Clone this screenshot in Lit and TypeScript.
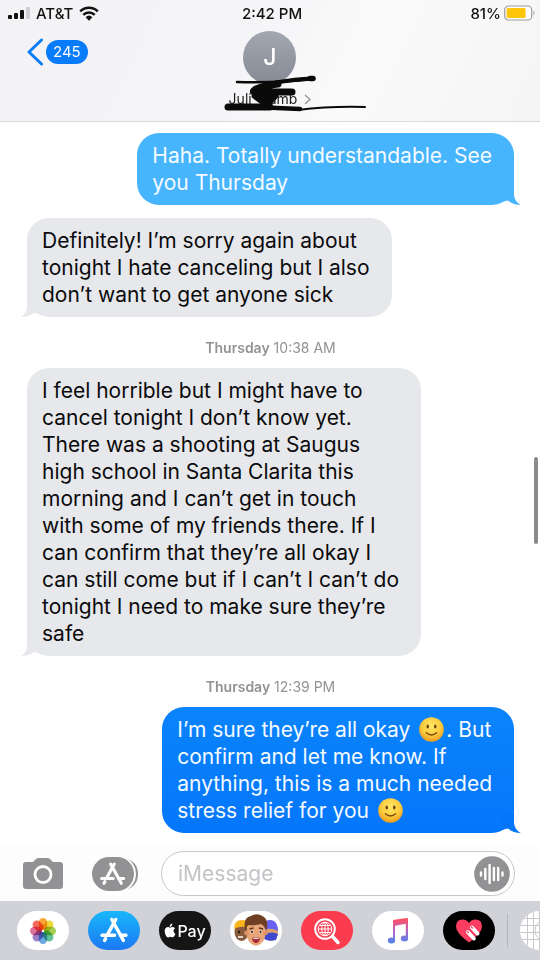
import { LitElement, html, css, svg } from "lit";
import { customElement, property } from "lit/decorators.js";
import { classMap } from "lit/directives/class-map.js";

type Part = string | { emoji: true };
type Entry =
  | { kind: "message"; side: "sent" | "received"; faded?: boolean; lines: Part[][] }
  | { kind: "stamp"; day: string; time: string };

const SMILE: Part = { emoji: true };

const THREAD: Entry[] = [
  {
    kind: "message",
    side: "sent",
    faded: true,
    lines: [["Haha. Totally understandable. See"], ["you Thursday"]],
  },
  {
    kind: "message",
    side: "received",
    lines: [
      ["Definitely! I’m sorry again about"],
      ["tonight I hate canceling but I also"],
      ["don’t want to get anyone sick"],
    ],
  },
  { kind: "stamp", day: "Thursday", time: "10:38 AM" },
  {
    kind: "message",
    side: "received",
    lines: [
      ["I feel horrible but I might have to"],
      ["cancel tonight I don’t know yet."],
      ["There was a shooting at Saugus"],
      ["high school in Santa Clarita this"],
      ["morning and I can’t get in touch"],
      ["with some of my friends there. If I"],
      ["can confirm that they’re all okay I"],
      ["can still come but if I can’t I can’t do"],
      ["tonight I need to make sure they’re"],
      ["safe"],
    ],
  },
  { kind: "stamp", day: "Thursday", time: "12:39 PM" },
  {
    kind: "message",
    side: "sent",
    lines: [
      ["I’m sure they’re all okay ", SMILE, ". But"],
      ["confirm and let me know. If"],
      ["anything, this is a much needed"],
      ["stress relief for you ", SMILE],
    ],
  },
];

const smile = html`<svg class="emoji" viewBox="0 0 24 24" role="img" aria-label="slightly smiling face">
  <defs>
    <radialGradient id="face" cx="50%" cy="35%" r="65%">
      <stop offset="0" stop-color="#ffe766" />
      <stop offset="0.6" stop-color="#fccb3d" />
      <stop offset="1" stop-color="#ef9a1f" />
    </radialGradient>
  </defs>
  <circle cx="12" cy="12" r="11.8" fill="url(#face)" />
  <ellipse cx="8.4" cy="9.2" rx="1.2" ry="1.9" fill="#6b4310" />
  <ellipse cx="15.6" cy="9.2" rx="1.2" ry="1.9" fill="#6b4310" />
  <path d="M7 15.2Q12 19.4 17 15.2" fill="none" stroke="#7a4a10" stroke-width="1.3" stroke-linecap="round" />
</svg>`;

/* The three crossed sticks of the App Store mark, on a 34 unit box. */
const sticks = svg`<g fill="none" stroke="#fff" stroke-linecap="round" stroke-width="3.4">
  <path d="M18.8 5.5L10.6 20.4M8.6 24.6L7.6 26.4" />
  <path d="M14.8 5.5L26.4 26.4" />
  <path d="M5 21.2H17.6M23.6 21.2H29" />
</g>`;

@customElement("chat-bubble")
export class ChatBubble extends LitElement {
  @property() side: "sent" | "received" = "received";
  @property({ type: Boolean }) faded = false;
  @property({ attribute: false }) lines: Part[][] = [];

  static styles = css`
    :host {
      display: flex;
    }
    .bubble {
      position: relative;
      margin: 0;
      padding: 9px 22px 9px 15px;
      border-radius: 22px;
      font-size: 21px;
      line-height: 27px;
      white-space: pre;
    }
    .received {
      background: #e7e8eb;
      color: #0b0b0d;
    }
    .sent {
      margin-left: auto;
      background: linear-gradient(#0a84fb, #0476fb);
      color: #f4faff;
    }
    .faded {
      background: #47b5fd;
    }
    .line {
      display: block;
    }
    .tail {
      position: absolute;
      bottom: 0;
      width: 22px;
      height: 20px;
    }
    .received .tail {
      left: -6px;
      fill: #e7e8eb;
    }
    .sent .tail {
      right: -7px;
      fill: #0476fb;
    }
    .faded .tail {
      fill: #47b5fd;
    }
    .emoji {
      width: 25px;
      height: 25px;
      margin: 0 2px 0 3px;
      vertical-align: -5px;
    }
  `;

  render() {
    const classes = { bubble: true, [this.side]: true, faded: this.faded };
    const tail =
      this.side === "sent"
        ? "M15 0V9C15 14 18 18 22 20C17 20 12.5 18.5 9 15.5L2 17V0Z"
        : "M6 0V9C6 14 4 17.5 0 20C5 20 9.5 18.5 13 16L20 17V0Z";
    return html`<p class=${classMap(classes)}>${this.lines.map(
      (line) => html`<span class="line">${line.map((p) => (typeof p === "string" ? p : smile))}</span>`
    )}<svg class="tail" viewBox="0 0 22 20" aria-hidden="true"><path d=${tail} /></svg></p>`;
  }
}

@customElement("chat-header")
export class ChatHeader extends LitElement {
  static styles = css`
    :host {
      display: block;
      background: linear-gradient(115deg, #f3f3f5, #f5f5f8 45%, #fafafa 65%, #f5f5f6);
      border-bottom: 1px solid #d9d9db;
      color: #111;
    }
    .status,
    .nav {
      display: grid;
      grid-template-columns: 1fr auto 1fr;
    }
    .status {
      align-items: center;
      height: 26px;
      padding: 0 4px 0 8px;
      font-size: 15px;
      font-weight: 500;
    }
    .carrier,
    .power {
      display: flex;
      align-items: center;
    }
    .carrier {
      gap: 6px;
    }
    .power {
      justify-content: flex-end;
      gap: 3px;
    }
    .nav {
      height: 95px;
      align-items: start;
    }
    .back {
      display: flex;
      align-items: center;
      justify-self: start;
      gap: 3px;
      margin: 12px 0 0 27px;
      padding: 0;
      border: 0;
      background: none;
      font: inherit;
    }
    .count {
      padding: 0 7px;
      border-radius: 12px;
      background: #087cfa;
      color: #fff;
      font-size: 15px;
      line-height: 24px;
    }
    .contact {
      position: relative;
      display: flex;
      flex-direction: column;
      align-items: center;
      padding: 5px 0 0;
      border: 0;
      background: none;
      color: #222;
      font: inherit;
    }
    .avatar {
      width: 53px;
      border-radius: 50%;
      background: linear-gradient(#a3a7b2, #868a95);
      color: #fff;
      font-size: 23px;
      font-weight: 500;
      line-height: 53px;
    }
    .name {
      display: flex;
      align-items: center;
      gap: 7px;
      font-size: 14px;
      line-height: 30px;
    }
    .hidden {
      width: 17px;
    }
    .fragments {
      display: flex;
    }
    .scribble {
      position: absolute;
      left: 50%;
      top: 46px;
      width: 150px;
      height: 44px;
      margin-left: -50px;
    }
  `;

  render() {
    return html`
      <div class="status">
        <div class="carrier">
          <svg width="22" height="14" viewBox="0 0 22 14" aria-hidden="true">
            <rect x="0" y="9" width="4" height="4" rx="1" fill="#111" />
            <rect x="6" y="7" width="4" height="6" rx="1" fill="#111" />
            <rect x="12" y="4" width="4" height="9" rx="1" fill="#111" />
            <rect x="18" y="1" width="4" height="12" rx="1" fill="#cfcfd1" />
          </svg>
          <span>AT&amp;T</span>
          <svg width="20" height="15" viewBox="0 0 20 15" aria-hidden="true">
            <g fill="none" stroke="#111" stroke-width="2.5">
              <path d="M1.2 5.4A12.5 12.5 0 0 1 18.8 5.4" />
              <path d="M4.3 8.9A8 8 0 0 1 15.7 8.9" />
            </g>
            <path d="M6.6 11.2A5 5 0 0 1 13.4 11.2L10 14.8Z" fill="#111" />
          </svg>
        </div>
        <span>2:42 PM</span>
        <div class="power">
          <span>81%</span>
          <svg width="32" height="16" viewBox="0 0 32 16" aria-hidden="true">
            <rect x="0.7" y="1" width="27" height="14" rx="3.8" fill="#fbfbfb" stroke="#9b9b9f" stroke-width="1.2" />
            <rect x="2.6" y="3" width="19" height="10" rx="1.6" fill="#fdc60b" />
            <path d="M29.5 5.5Q31.6 8 29.5 10.5Z" fill="#9b9b9f" />
          </svg>
        </div>
      </div>
      <div class="nav">
        <button class="back" aria-label="Back, 245 unread">
          <svg width="16" height="28" viewBox="0 0 16 28" aria-hidden="true">
            <path d="M14.5 2L2 14L14.5 26" fill="none" stroke="#087cfa" stroke-width="3" stroke-linecap="round" stroke-linejoin="round" />
          </svg>
          <span class="count">245</span>
        </button>
        <button class="contact">
          <span class="avatar">J</span>
          <span class="name">
            <span class="fragments"><span>Juli</span><span class="hidden"></span><span>amb</span></span>
            <svg width="7" height="11" viewBox="0 0 7 11" aria-hidden="true">
              <path d="M1 1L6 5.5L1 10" fill="none" stroke="#8e8e93" stroke-width="1.2" />
            </svg>
          </span>
          <svg class="scribble" viewBox="0 0 150 44" aria-hidden="true">
            <g fill="none" stroke="#0a0a0a" stroke-linecap="round" stroke-linejoin="round">
              <path d="M17 10Q58 11 94 7" stroke-width="2.5" />
              <path d="M56 10.5Q76 7 92 6.500" stroke-width="4" />
              <path d="M90 6.5H93" stroke-width="5.5" />
              <path d="M58 12Q46 13 36 17Q30 21 38 20H72" stroke-width="7" />
              <path d="M34 24L42 30H50L56 24Z" stroke-width="5" fill="#0a0a0a" />
              <path d="M8 35H50" stroke-width="7" />
              <path d="M34 35L80 37" stroke-width="4.5" />
              <path d="M78 38Q110 34 145 35" stroke-width="2" />
            </g>
          </svg>
        </button>
      </div>
    `;
  }
}

@customElement("chat-composer")
export class ChatComposer extends LitElement {
  static styles = css`
    :host {
      display: flex;
      align-items: center;
      padding: 6px 25px 5px 22px;
      background: #fdfdfe;
    }
    button {
      display: block;
      padding: 0;
      border: 0;
      background: none;
    }
    svg {
      display: block;
    }
    .apps {
      margin: 0 23px 0 28px;
    }
    .field {
      display: flex;
      flex: 1;
      align-items: center;
      box-sizing: border-box;
      height: 45px;
      min-width: 0;
      padding: 0 4px 0 16px;
      border: 1px solid #c8c8cc;
      border-radius: 23px;
      background: #fff;
    }
    .input {
      flex: 1;
      min-width: 0;
      padding: 0;
      border: 0;
      outline: 0;
      background: none;
      color: #111;
      font: inherit;
      font-size: 21px;
    }
    .input::placeholder {
      color: #c4c4c8;
      opacity: 1;
    }
  `;

  render() {
    return html`
      <button aria-label="Camera">
        <svg width="42" height="34" viewBox="0 0 42 34">
          <path d="M4 5H11L14 2Q15 1 17 1H25Q27 1 28 2L31 5H38Q41 5 41 8V29Q41 32 38 32H4Q1 32 1 29V8Q1 5 4 5Z" fill="#929295" />
          <circle cx="21" cy="17.5" r="8" fill="none" stroke="#fff" stroke-width="2.8" />
        </svg>
      </button>
      <button class="apps" aria-label="Apps">
        <svg width="46" height="34" viewBox="0 0 46 34">
          <path d="M32 1Q46 4 46 17T32 33Z" fill="#929295" />
          <rect x="-1" y="-1" width="45" height="36" rx="18" fill="#fdfdfe" />
          <rect x="0" y="0" width="42" height="34" rx="17" fill="#929295" />
          <g transform="translate(5 2) scale(0.92)">${sticks}</g>
        </svg>
      </button>
      <div class="field">
        <input class="input" type="text" placeholder="iMessage" aria-label="iMessage" />
        <button aria-label="Record audio">
          <svg width="36" height="36" viewBox="0 0 36 36">
            <circle cx="18" cy="18" r="17.8" fill="#929295" />
            <path d="M7 16.5V19.5M11.3 13V23M15.6 9V27M19.9 12V24M24.2 12V24M28.5 16.5V19.5" fill="none" stroke="#fff" stroke-width="2.4" stroke-linecap="round" />
          </svg>
        </button>
      </div>
    `;
  }
}

@customElement("app-strip")
export class AppStrip extends LitElement {
  static styles = css`
    :host {
      display: flex;
      align-items: center;
      gap: 19px;
      height: 59px;
      padding-left: 17px;
      background: #d1d2d8;
      overflow: hidden;
    }
    .app {
      flex: none;
      display: flex;
      align-items: center;
      justify-content: center;
      width: 52px;
      height: 39px;
      padding: 0;
      border: 0;
      border-radius: 20px;
      overflow: hidden;
      background: #fff;
    }
    .petal {
      mix-blend-mode: multiply;
    }
    .store {
      background: linear-gradient(#19b7fb, #1c78f2);
    }
    .pay {
      gap: 1px;
      background: #151515;
      color: #fff;
      font: 500 16px/20px Inter, "Liberation Sans", sans-serif;
    }
    .search {
      background: #fb3b4e;
    }
    .heart {
      background: #000;
    }
    .rule {
      flex: none;
      width: 1px;
      height: 33px;
      margin: 0 -7px;
      background: #b5b6bc;
    }
  `;

  render() {
    const petals: [number, string][] = [
      [0, "#f9a63a"],
      [45, "#ecd93a"],
      [90, "#a3cf52"],
      [135, "#63c29a"],
      [180, "#6aa9e0"],
      [225, "#9b80c8"],
      [270, "#e0709c"],
      [315, "#f5695a"],
    ];
    return html`
      <button class="app" aria-label="Photos">
        <svg width="28" height="28" viewBox="0 0 28 28">
          ${petals.map(
            ([angle, fill]) =>
              svg`<rect class="petal" x="9.8" y="1" width="8.4" height="12" rx="4.2" fill=${fill} transform="rotate(${angle} 14 14)" />`
          )}
        </svg>
      </button>
      <button class="app store" aria-label="App Store">
        <svg width="34" height="34" viewBox="0 0 34 34">${sticks}</svg>
      </button>
      <button class="app pay" aria-label="Apple Pay">
        <svg width="12" height="15" viewBox="0 0 12 15">
          <path d="M8.3 0.5Q8.4 2 7.5 3T5.7 3.9Q5.6 2.6 6.5 1.6T8.3 0.5ZM6 4.8Q7.2 4 8.4 4Q10.2 4.1 11 5.3Q9.5 6.3 9.5 8Q9.6 10 11.4 10.8Q10.2 14.3 8.5 14.3Q7.7 14.3 7.2 14Q6.3 13.7 5.5 14Q4.8 14.4 4.2 14.4Q2.6 14.3 1.3 11.4Q0 8.2 1 6Q2 4 4 4Q5 4.1 6 4.8Z" fill="#fff" />
        </svg>
        <span>Pay</span>
      </button>
      <button class="app" aria-label="Memoji">
        <svg width="50" height="37" viewBox="0 0 50 37">
          <ellipse cx="10.5" cy="20" rx="7" ry="9" fill="#8a5a3c" />
          <path d="M3 17Q3 8 11 8T19 16Q10 13 3 17Z" fill="#f7b51b" />
          <circle cx="8" cy="20" r="1.2" fill="#2b1710" />
          <path d="M7 25H12" stroke="#fff" stroke-width="1.5" />
          <ellipse cx="40" cy="20" rx="7" ry="9" fill="#dca16a" />
          <path d="M32 16Q33 7 40 8T47 19Q40 15 32 18Z" fill="#6a62f0" />
          <path d="M33 22Q42 19 47 22L45 28Q38 30 33 27Z" fill="#3f49d0" />
          <ellipse cx="25" cy="21" rx="9.5" ry="12.5" fill="#e8a578" />
          <circle cx="15.5" cy="21" r="2.3" fill="#dc9366" />
          <circle cx="34.5" cy="21" r="2.3" fill="#dc9366" />
          <path d="M14.5 19Q11 6 20 4Q27 0 33 5Q38 9 35.5 19Q34 14 30 12Q22 14 17 13Q15.5 15 14.5 19Z" fill="#6e3f22" />
          <path d="M18.5 17L22.5 16M28 16L32 17" stroke="#5b3320" stroke-width="1.4" />
          <circle cx="21" cy="19.8" r="1.5" fill="#fff" />
          <circle cx="29.5" cy="19.8" r="1.5" fill="#fff" />
          <circle cx="21" cy="19.8" r="1.1" fill="#2d1a12" />
          <circle cx="29.5" cy="19.8" r="1.1" fill="#2d1a12" />
          <path d="M21 26Q25 24 29 26Q28.5 31 25 31T21 26Z" fill="#a92c38" />
          <path d="M22 26Q25 24.8 28 26V26.8H22Z" fill="#fff" />
        </svg>
      </button>
      <button class="app search" aria-label="Image search">
        <svg width="28" height="28" viewBox="0 0 28 28">
          <g fill="none" stroke="#fff">
            <circle cx="12" cy="12" r="9.8" stroke-width="2" />
            <circle cx="12" cy="12" r="6.8" stroke-width="1" />
            <ellipse cx="12" cy="12" rx="3.2" ry="6.8" stroke-width="1" />
            <path d="M5 12H19M6.5 8.5H17.5M6.5 15.5H17.5M12 5V19" stroke-width="1" />
            <path d="M19.5 19.5L25 25.5" stroke-width="3.4" stroke-linecap="round" />
          </g>
        </svg>
      </button>
      <button class="app" aria-label="Music">
        <svg width="24" height="28" viewBox="0 0 24 28">
          <defs>
            <linearGradient id="note" x1="0" y1="0" x2="0" y2="28" gradientUnits="userSpaceOnUse">
              <stop offset="0.1" stop-color="#fb5268" />
              <stop offset="0.5" stop-color="#b463c8" />
              <stop offset="1" stop-color="#3d8df5" />
            </linearGradient>
          </defs>
          <g fill="url(#note)">
            <path d="M7 4Q7 3 8 2.8L21 1Q22 1 22 2V21H19.8V6.8L9 8.8V23H7Z" />
            <ellipse cx="5.5" cy="23.5" rx="3.7" ry="2.9" />
            <ellipse cx="18.5" cy="21.5" rx="3.7" ry="2.9" />
          </g>
        </svg>
      </button>
      <button class="app heart" aria-label="Digital Touch">
        <svg width="28" height="26" viewBox="0 0 28 26">
          <path d="M14 24.5Q1 15 1 8.5Q1 1.5 7.5 1.5Q12 1.5 14 5Q16 1.5 20.5 1.5Q27 1.5 27 8.5Q27 15 14 24.5Z" fill="#fb3d62" />
          <path d="M17 9.5L22.5 15.5M12.8 14L18.8 20.5" stroke="#fff" stroke-width="4" stroke-linecap="round" />
          <path d="M16.4 9L17.6 10.2M12.2 13.5L13.4 14.700" stroke="#fb3d62" stroke-width="1.2" stroke-linecap="round" />
        </svg>
      </button>
      <span class="rule"></span>
      <button class="app" aria-label="More apps">
        <svg width="52" height="39" viewBox="0 0 52 39">
          <path d="M0 7.5H52M0 14.5H52M0 21.5H52M0 28.5H52M7.5 0V39M13.5 0V39M19.5 0V39M25.5 0V39" stroke="#c9c9cd" />
          <circle cx="26" cy="19.5" r="11" fill="none" stroke="#c9c9cd" />
        </svg>
      </button>
    `;
  }
}

@customElement("app-root")
export class AppRoot extends LitElement {
  static styles = css`
    :host {
      display: flex;
      flex-direction: column;
      min-height: 100vh;
      background: #fff;
      font-family: Inter, "Liberation Sans", sans-serif;
    }
    .thread {
      position: relative;
      flex: 1;
      display: flex;
      flex-direction: column;
      padding: 11px 26px 12px 27px;
    }
    .follow {
      margin-top: 13px;
    }
    .stamp {
      margin: 0;
      padding: 21px 0 10px;
      color: #929296;
      font-size: 14px;
      line-height: 20px;
      text-align: center;
    }
    .day {
      font-weight: 600;
    }
    .scroll {
      position: absolute;
      right: 2px;
      top: 335px;
      width: 4px;
      height: 87px;
      border-radius: 2px;
      background: #8b8b8d;
    }
  `;

  render() {
    return html`
      <chat-header></chat-header>
      <main class="thread">
        ${THREAD.map((e, i) =>
          e.kind === "stamp"
            ? html`<p class="stamp"><span class="day">${e.day}</span> ${e.time}</p>`
            : html`<chat-bubble
                class=${classMap({ follow: i > 0 && THREAD[i - 1].kind === "message" })}
                .side=${e.side}
                .faded=${e.faded ?? false}
                .lines=${e.lines}
              ></chat-bubble>`
        )}
        <span class="scroll"></span>
      </main>
      <chat-composer></chat-composer>
      <app-strip></app-strip>
    `;
  }
}
